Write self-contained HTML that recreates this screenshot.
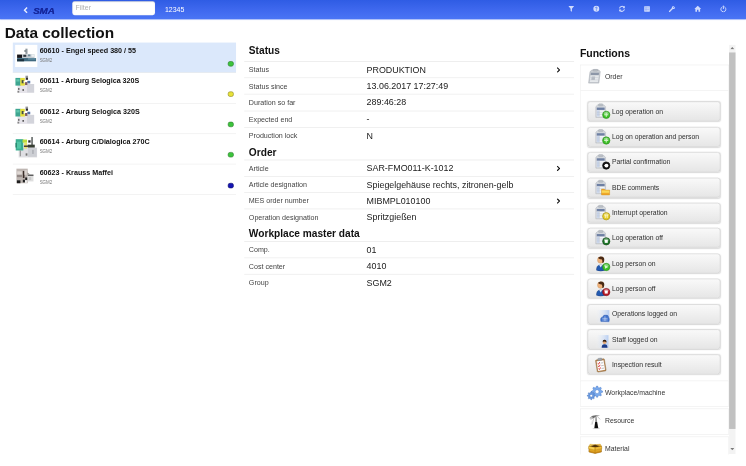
<!DOCTYPE html>
<html><head><meta charset="utf-8"><title>Data collection</title>
<style>
html,body{margin:0;padding:0;width:746px;height:466px;overflow:hidden;background:#fff;}
*{box-sizing:border-box;}
#w{position:absolute;left:0;top:0;width:1280px;height:800px;transform:scale(0.5828125);transform-origin:0 0;font-family:"Liberation Sans",sans-serif;color:#111;overflow:hidden;background:#fff;}
#hd{position:absolute;left:0;top:0;width:1280px;height:33px;background:linear-gradient(#2f5ce4,#3e68ee 50%,#4a75f5);box-shadow:0 1px 2.5px rgba(70,110,235,.75);}
#hd .back{position:absolute;left:40px;top:12px;}
#hd .logo{position:absolute;left:57px;top:10.7px;font:italic bold 14.5px "Liberation Sans",sans-serif;color:#15279c;letter-spacing:-0.3px;line-height:16px;transform:scaleX(1.17);transform-origin:0 0;text-shadow:0 0 0.5px #15279c;}
#hd .filter{position:absolute;left:124px;top:1.5px;width:142px;height:24.5px;background:#fff;border-radius:4px;font-size:12px;color:#b0b0b0;line-height:24.5px;padding-left:5.5px;box-shadow:inset 0 1px 2px rgba(0,0,0,.2);}
#hd .num{position:absolute;left:283px;top:9px;font-size:12px;color:#fff;line-height:14px;}
#hd svg.ic{position:absolute;top:9px;width:12.4px;height:12.4px;}
h1{position:absolute;left:8px;top:41.5px;margin:0;font-size:26.4px;font-weight:bold;line-height:30px;color:#111;}
#list{position:absolute;left:22px;top:73px;width:383.2px;}
.li{position:relative;height:52.3px;border-bottom:1px solid #ebebeb;}
.li.sel{background:#dbe8fb;}
.li .th{position:absolute;left:3.6px;top:4px;width:38px;height:38px;overflow:visible;}
.li .t{position:absolute;left:46px;top:6.5px;font-size:12.3px;font-weight:bold;line-height:14px;white-space:nowrap;color:#111;}
.li .s{position:absolute;left:46px;top:26px;font-size:7.6px;line-height:9px;color:#777;}
.li .dot{position:absolute;left:369px;top:31.6px;width:10.2px;height:9px;border-radius:3.6px;border:1.4px solid #2a7a2a;}
#mid{position:absolute;left:419px;top:71.4px;width:566px;}
#mid h2{margin:0;height:28.05px;font-size:17.4px;line-height:28px;padding-left:8px;font-weight:bold;border-bottom:1px solid #e2e2e2;color:#111;}
#mid h2.first{height:35px;line-height:30px;}
.r{position:relative;height:28.05px;border-bottom:1px solid #e6e6e6;}
.r .l{position:absolute;left:8px;top:0;font-size:12.2px;line-height:28px;color:#444;}
.r .v{position:absolute;left:210px;top:0;font-size:15.25px;line-height:27px;color:#1a1a1a;}
.r .c{position:absolute;left:535.5px;top:9px;}
#fn{position:absolute;left:995px;top:80.4px;width:256px;height:699.4px;overflow:hidden;}
#fn h2{margin:0;font-size:18px;line-height:24px;font-weight:bold;color:#111;}
.sec{position:relative;height:44.6px;border:1px solid #ececec;background:#fff;margin-top:3.2px;}
.sec .n{position:absolute;left:42px;top:0;line-height:40px;font-size:11.8px;color:#333;}
.sec svg{position:absolute;left:9px;top:6px;width:30px;height:30px;}
.body{border-left:1px solid #ececec;border-right:1px solid #ececec;padding:18.5px 12px 1.6px 12px;}
.btn{position:relative;height:34px;width:228px;margin-bottom:9.4px;border:1px solid #c9c9c9;border-radius:5px;background:linear-gradient(#f9f9f9,#e6e6e6);box-shadow:0 1px 2px rgba(0,0,0,.15);}
.btn span{position:absolute;left:41px;top:0;line-height:32px;font-size:11.7px;color:#2e2e2e;white-space:nowrap;}
.btn svg{position:absolute;left:8px;top:1px;width:30px;height:30px;overflow:visible;}
#sb{position:absolute;left:1251px;top:76.5px;width:11px;height:702px;background:#f3f3f3;}
#sb .th{position:absolute;left:0;top:13px;width:11px;height:646px;background:#c1c1c1;}
</style></head><body>
<div id="w">
<svg width="0" height="0" style="position:absolute"><defs><filter id="bl" x="-10%" y="-10%" width="120%" height="120%"><feGaussianBlur stdDeviation="0.85"/></filter><filter id="bl2" x="-10%" y="-10%" width="120%" height="120%"><feGaussianBlur stdDeviation="0.35"/></filter></defs></svg>
<div id="hd">
 <svg class="back" width="8" height="11" viewBox="0 0 8 11"><path d="M6.5 1 L2 5.5 L6.5 10" fill="none" stroke="#e8eeff" stroke-width="2.4"/></svg>
 <div class="logo">SMA</div>
 <div class="filter">Filter</div>
 <div class="num">12345</div>
 <svg class="ic" style="left:974.1px" viewBox="0 0 14 14"><path d="M1.5 1.5 H12.5 L8.3 6.8 V12.5 L5.7 11 V6.8 Z" fill="#cfdbfd"/></svg>
 <svg class="ic" style="left:1016.8px" viewBox="0 0 14 14"><circle cx="7" cy="7" r="5.8" fill="#cfdbfd"/><path d="M5.3 5.6 Q5.3 3.8 7 3.8 Q8.8 3.8 8.8 5.4 Q8.8 6.4 7 7.2 V8.2" fill="none" stroke="#4470f0" stroke-width="1.5"/><circle cx="7" cy="10" r="0.9" fill="#4470f0"/></svg>
 <svg class="ic" style="left:1060.5px" viewBox="0 0 14 14"><path d="M2.2 6.2 A5 5 0 0 1 11 4" fill="none" stroke="#cfdbfd" stroke-width="2"/><path d="M12.5 1.2 V5.8 H8 Z" fill="#cfdbfd"/><path d="M11.8 7.8 A5 5 0 0 1 3 10" fill="none" stroke="#cfdbfd" stroke-width="2"/><path d="M1.5 12.8 V8.2 H6 Z" fill="#cfdbfd"/></svg>
 <svg class="ic" style="left:1103.8px" viewBox="0 0 14 14"><rect x="1.5" y="1.8" width="11" height="10.6" rx="0.8" fill="#cfdbfd"/><path d="M2.5 5.2 H11.5 M2.5 8.6 H11.5" stroke="#6d90f5" stroke-width="0.9"/><path d="M5 2.5 V11.8" stroke="#6d90f5" stroke-width="0.7"/></svg>
 <svg class="ic" style="left:1146.8px" viewBox="0 0 14 14"><path d="M2 12 L8 6" stroke="#cfdbfd" stroke-width="2.6" stroke-linecap="round"/><circle cx="9.6" cy="4.4" r="3" fill="#cfdbfd"/><path d="M9.6 4.4 L13.5 0.5" stroke="#4470f0" stroke-width="2"/></svg>
 <svg class="ic" style="left:1191.3px" viewBox="0 0 14 14"><path d="M7 1 L13.6 7.2 H11.6 V12.8 H8.4 V8.8 H5.6 V12.8 H2.4 V7.2 H0.4 Z" fill="#cfdbfd"/></svg>
 <svg class="ic" style="left:1234.8px" viewBox="0 0 14 14"><path d="M4.4 3.4 A5 5 0 1 0 9.6 3.4" fill="none" stroke="#cfdbfd" stroke-width="1.9" stroke-linecap="round"/><path d="M7 1.2 V6.6" stroke="#cfdbfd" stroke-width="1.9" stroke-linecap="round"/></svg>
</div>
<h1>Data collection</h1>
<div id="list">
 <div class="li sel"><svg class="th" viewBox="0 0 38 38"><rect width="38" height="38" fill="#fff"/><g filter="url(#bl)"><rect x="17.6" y="6.5" width="3.6" height="9" fill="#8f989e"/><rect x="16" y="9" width="2" height="3" fill="#5d6b6f"/><rect x="3.3" y="16.6" width="9" height="5.8" fill="#15181c"/><rect x="12.2" y="16" width="21" height="6.6" fill="#c4ccd2"/><rect x="14" y="17" width="5" height="3.5" fill="#2f353b"/><rect x="22" y="16.5" width="4" height="3" fill="#6d8796"/><rect x="28" y="16.4" width="5" height="4" fill="#eef1f3"/><rect x="3.3" y="22.6" width="32.6" height="5.6" fill="#3f6a80"/><rect x="3.3" y="24.4" width="12" height="3.8" fill="#1f333f"/><rect x="22" y="23" width="13" height="2.2" fill="#6a95a8"/></g></svg><div class="t">60610 - Engel speed 380 / 55</div><div class="s">SGM2</div><div class="dot" style="background:#3cc43c;border-color:#2a7a2a"></div></div>
 <div class="li"><svg class="th" viewBox="0 0 38 38"><g filter="url(#bl)" transform="translate(0 0.9)" opacity="0.9"><rect x="4" y="14.2" width="28.6" height="15.5" fill="#e4e2e8"/><rect x="20.5" y="14.2" width="12" height="14.5" fill="#cfd0d8"/><rect x="0.5" y="3.8" width="9" height="13.2" fill="#2a9c84"/><rect x="2" y="6" width="5.5" height="4" fill="#4fc0a4"/><rect x="8.8" y="3.8" width="7.8" height="13.2" fill="#e4dc28"/><rect x="11.2" y="7.6" width="3.4" height="5.4" fill="#2c3a30"/><rect x="14.6" y="9" width="2" height="3" fill="#fff"/><rect x="17.7" y="0" width="4.4" height="7.2" fill="#8a8a90"/><rect x="18.8" y="3.6" width="3" height="3.2" fill="#0a0a0a"/><rect x="20.9" y="8.8" width="5" height="4.4" fill="#3d5f9a"/><rect x="17" y="11" width="4" height="5" fill="#6d4a50"/><rect x="5" y="21" width="2.4" height="3.4" fill="#555"/><rect x="12.5" y="23" width="2.6" height="3" fill="#444"/><rect x="4" y="26" width="3" height="3" fill="#777"/></g></svg><div class="t">60611 - Arburg Selogica 320S</div><div class="s">SGM2</div><div class="dot" style="background:#e8e238;border-color:#8a8420"></div></div>
 <div class="li"><svg class="th" viewBox="0 0 38 38"><g filter="url(#bl)" transform="translate(0 0.9)" opacity="0.9"><rect x="4" y="14.2" width="28.6" height="15.5" fill="#e4e2e8"/><rect x="20.5" y="14.2" width="12" height="14.5" fill="#cfd0d8"/><rect x="0.5" y="3.8" width="9" height="13.2" fill="#2a9c84"/><rect x="2" y="6" width="5.5" height="4" fill="#4fc0a4"/><rect x="8.8" y="3.8" width="7.8" height="13.2" fill="#e4dc28"/><rect x="11.2" y="7.6" width="3.4" height="5.4" fill="#2c3a30"/><rect x="14.6" y="9" width="2" height="3" fill="#fff"/><rect x="17.7" y="0" width="4.4" height="7.2" fill="#8a8a90"/><rect x="18.8" y="3.6" width="3" height="3.2" fill="#0a0a0a"/><rect x="20.9" y="8.8" width="5" height="4.4" fill="#3d5f9a"/><rect x="17" y="11" width="4" height="5" fill="#6d4a50"/><rect x="5" y="21" width="2.4" height="3.4" fill="#555"/><rect x="12.5" y="23" width="2.6" height="3" fill="#444"/><rect x="4" y="26" width="3" height="3" fill="#777"/></g></svg><div class="t">60612 - Arburg Selogica 320S</div><div class="s">SGM2</div><div class="dot" style="background:#3cc43c;border-color:#2a7a2a"></div></div>
 <div class="li"><svg class="th" viewBox="0 0 38 38"><g filter="url(#bl)" transform="translate(0 3.1)" opacity="0.9"><rect x="6" y="16.1" width="31.6" height="17" fill="#dcdce0"/><rect x="22" y="17" width="15" height="15" fill="#c8cad0"/><rect x="1" y="1.7" width="13" height="19.4" fill="#25a684"/><rect x="3" y="6" width="7" height="12" fill="#3fc09c"/><rect x="0.5" y="8" width="2.5" height="8" fill="#157a5e"/><rect x="12.7" y="2.3" width="7.7" height="5.5" fill="#b6dc2a"/><rect x="15.5" y="7.8" width="5" height="10" fill="#e6e058"/><rect x="27.6" y="-2" width="2.8" height="15.3" fill="#555b5a"/><rect x="22.5" y="3.6" width="4" height="4" fill="#0c0c0c"/><rect x="21.5" y="11.1" width="12.2" height="5" fill="#23291f"/><rect x="15" y="12.5" width="7" height="2.6" fill="#3a2a20"/><rect x="8" y="21" width="1.6" height="10" fill="#777"/><rect x="18" y="26" width="3" height="4" fill="#666"/><rect x="29" y="20" width="3" height="7" fill="#a9abb2"/></g></svg><div class="t">60614 - Arburg C/Dialogica 270C</div><div class="s">SGM2</div><div class="dot" style="background:#3cc43c;border-color:#2a7a2a"></div></div>
 <div class="li"><svg class="th" viewBox="0 0 38 38"><g filter="url(#bl)" transform="translate(0 3.9)" opacity="0.92"><rect x="2.2" y="-0.5" width="19.4" height="25" fill="#b9b0ac"/><rect x="3.5" y="4" width="8" height="6" fill="#dcd4d0"/><rect x="3" y="10" width="9" height="4" fill="#8a807c"/><rect x="13.2" y="3.4" width="2.8" height="12.2" fill="#2a1c18"/><rect x="16" y="2" width="4" height="8" fill="#d8d0cc"/><rect x="3" y="19.5" width="6" height="5" fill="#0c0c0c"/><rect x="13.2" y="18.4" width="3.6" height="4.6" fill="#0c0c0c"/><rect x="17.2" y="14.6" width="3.6" height="4.4" fill="#101010"/><rect x="17" y="19.4" width="3" height="4.4" fill="#f4f4f4"/><rect x="21.6" y="10" width="9.8" height="11.4" fill="#dcdcdc"/><rect x="21.6" y="9.6" width="9.8" height="2.4" fill="#4a4a4a"/><rect x="23.5" y="14" width="4" height="5" fill="#c4c4c4"/><path d="M21 6 L26 9.6 H21 Z" fill="#8c8480"/></g></svg><div class="t">60623 - Krauss Maffei</div><div class="s">SGM2</div><div class="dot" style="background:#1414b4;border-color:#0a0a66"></div></div>
</div>
<div id="mid">
 <h2 class="first">Status</h2>
 <div class="r"><div class="l">Status</div><div class="v">PRODUKTION</div><svg class="c" width="6" height="10" viewBox="0 0 6 10"><path d="M1 1 L5 5 L1 9" fill="none" stroke="#111" stroke-width="1.9"/></svg></div>
 <div class="r"><div class="l">Status since</div><div class="v">13.06.2017 17:27:49</div></div>
 <div class="r"><div class="l">Duration so far</div><div class="v">289:46:28</div></div>
 <div class="r"><div class="l">Expected end</div><div class="v">-</div></div>
 <div class="r" style="border-bottom:none"><div class="l">Production lock</div><div class="v">N</div></div>
 <h2>Order</h2>
 <div class="r"><div class="l">Article</div><div class="v">SAR-FMO011-K-1012</div><svg class="c" width="6" height="10" viewBox="0 0 6 10"><path d="M1 1 L5 5 L1 9" fill="none" stroke="#111" stroke-width="1.9"/></svg></div>
 <div class="r"><div class="l">Article designation</div><div class="v">Spiegelgehäuse rechts, zitronen-gelb</div></div>
 <div class="r"><div class="l">MES order number</div><div class="v">MIBMPL010100</div><svg class="c" width="6" height="10" viewBox="0 0 6 10"><path d="M1 1 L5 5 L1 9" fill="none" stroke="#111" stroke-width="1.9"/></svg></div>
 <div class="r" style="border-bottom:none"><div class="l">Operation designation</div><div class="v">Spritzgießen</div></div>
 <h2>Workplace master data</h2>
 <div class="r"><div class="l">Comp.</div><div class="v">01</div></div>
 <div class="r"><div class="l">Cost center</div><div class="v">4010</div></div>
 <div class="r" style="border-bottom:none"><div class="l">Group</div><div class="v">SGM2</div></div>
</div>
<div id="fn">
 <h2>Functions</h2>
 <div class="sec" style="margin-top:7px;border-bottom:1px solid #ececec"><svg viewBox="0 0 30 30"><g filter="url(#bl2)"><g transform="translate(2.5 0) skewX(-7)"><path d="M5.5 5 L8.5 2 H20 L23 5 V24.6 H5.5 Z" fill="#c9cdd2" stroke="#a3a9b0" stroke-width="0.9"/><rect x="10.6" y="0.6" width="7.5" height="3.4" rx="1" fill="#b9bec4" stroke="#989ea6" stroke-width="0.6"/><rect x="7.3" y="7" width="13.9" height="3.6" fill="#8d97a8"/><rect x="7.3" y="11.4" width="13.9" height="11.4" fill="#e6e9ec"/><rect x="9.4" y="13.4" width="6" height="6" fill="#b4bac2"/><path d="M7.3 15 H21.2 M7.3 19 H21.2" stroke="#c2c7ce" stroke-width="0.7"/></g></g></svg><div class="n">Order</div></div>
 <div class="body">
  <div class="btn"><svg viewBox="0 0 30 30"><g filter="url(#bl2)"><g><path d="M5.3 7 L8.5 4 H19 L22 7 V25.5 H5.3 Z" fill="#d3d7dc" stroke="#aab0b7" stroke-width="0.8"/><rect x="10" y="2.2" width="7.4" height="3.6" rx="1" fill="#bcc1c7" stroke="#9da3aa" stroke-width="0.6"/><rect x="7" y="8.6" width="13.4" height="4" fill="#6d7fa3"/><rect x="7" y="13.4" width="13.4" height="10.4" fill="#f3f5f8"/><rect x="7" y="13.4" width="4.4" height="10.4" fill="#c9d6ec"/><path d="M11.4 13.4 V23.8 M7 16.8 H20.4 M7 20.3 H20.4" stroke="#b9c0ca" stroke-width="0.7"/></g><circle cx="23.2" cy="21.1" r="6.3" fill="#3cbf28" stroke="#2a8a1c" stroke-width="1"/><ellipse cx="23.2" cy="18.6" rx="4.2" ry="2.7" fill="#fff" opacity="0.4"/><path d="M23.2 17.6 V24.6 M19.7 21.1 H26.7" stroke="#d4f7ca" stroke-width="1.7"/></g></svg><span>Log operation on</span></div>
  <div class="btn"><svg viewBox="0 0 30 30"><g filter="url(#bl2)"><g><path d="M5.3 7 L8.5 4 H19 L22 7 V25.5 H5.3 Z" fill="#d3d7dc" stroke="#aab0b7" stroke-width="0.8"/><rect x="10" y="2.2" width="7.4" height="3.6" rx="1" fill="#bcc1c7" stroke="#9da3aa" stroke-width="0.6"/><rect x="7" y="8.6" width="13.4" height="4" fill="#6d7fa3"/><rect x="7" y="13.4" width="13.4" height="10.4" fill="#f3f5f8"/><rect x="7" y="13.4" width="4.4" height="10.4" fill="#c9d6ec"/><path d="M11.4 13.4 V23.8 M7 16.8 H20.4 M7 20.3 H20.4" stroke="#b9c0ca" stroke-width="0.7"/></g><circle cx="23.2" cy="21.1" r="6.3" fill="#3cbf28" stroke="#2a8a1c" stroke-width="1"/><ellipse cx="23.2" cy="18.6" rx="4.2" ry="2.7" fill="#fff" opacity="0.4"/><path d="M23.2 17.6 V24.6 M19.7 21.1 H26.7" stroke="#d4f7ca" stroke-width="1.7"/></g></svg><span>Log on operation and person</span></div>
  <div class="btn"><svg viewBox="0 0 30 30"><g filter="url(#bl2)"><g><path d="M5.3 7 L8.5 4 H19 L22 7 V25.5 H5.3 Z" fill="#d3d7dc" stroke="#aab0b7" stroke-width="0.8"/><rect x="10" y="2.2" width="7.4" height="3.6" rx="1" fill="#bcc1c7" stroke="#9da3aa" stroke-width="0.6"/><rect x="7" y="8.6" width="13.4" height="4" fill="#6d7fa3"/><rect x="7" y="13.4" width="13.4" height="10.4" fill="#f3f5f8"/><rect x="7" y="13.4" width="4.4" height="10.4" fill="#c9d6ec"/><path d="M11.4 13.4 V23.8 M7 16.8 H20.4 M7 20.3 H20.4" stroke="#b9c0ca" stroke-width="0.7"/></g><circle cx="23.2" cy="21.1" r="6.3" fill="#161616" stroke="#000" stroke-width="1"/><circle cx="23.6" cy="21.1" r="3.3" fill="#fff"/><path d="M19.6 21.1 L23 18.2 V24 Z" fill="#fff"/></g></svg><span>Partial confirmation</span></div>
  <div class="btn"><svg viewBox="0 0 30 30"><g filter="url(#bl2)"><g><path d="M5.3 7 L8.5 4 H19 L22 7 V25.5 H5.3 Z" fill="#d3d7dc" stroke="#aab0b7" stroke-width="0.8"/><rect x="10" y="2.2" width="7.4" height="3.6" rx="1" fill="#bcc1c7" stroke="#9da3aa" stroke-width="0.6"/><rect x="7" y="8.6" width="13.4" height="4" fill="#6d7fa3"/><rect x="7" y="13.4" width="13.4" height="10.4" fill="#f3f5f8"/><rect x="7" y="13.4" width="4.4" height="10.4" fill="#c9d6ec"/><path d="M11.4 13.4 V23.8 M7 16.8 H20.4 M7 20.3 H20.4" stroke="#b9c0ca" stroke-width="0.7"/></g><path d="M15 17.5 H20 L21.5 19.2 H29 V27.5 H15 Z" fill="#f0a82a" stroke="#c98a18" stroke-width="0.7"/><rect x="15.7" y="19.8" width="12.6" height="4" fill="#fbd858"/></g></svg><span>BDE comments</span></div>
  <div class="btn"><svg viewBox="0 0 30 30"><g filter="url(#bl2)"><g><path d="M5.3 7 L8.5 4 H19 L22 7 V25.5 H5.3 Z" fill="#d3d7dc" stroke="#aab0b7" stroke-width="0.8"/><rect x="10" y="2.2" width="7.4" height="3.6" rx="1" fill="#bcc1c7" stroke="#9da3aa" stroke-width="0.6"/><rect x="7" y="8.6" width="13.4" height="4" fill="#6d7fa3"/><rect x="7" y="13.4" width="13.4" height="10.4" fill="#f3f5f8"/><rect x="7" y="13.4" width="4.4" height="10.4" fill="#c9d6ec"/><path d="M11.4 13.4 V23.8 M7 16.8 H20.4 M7 20.3 H20.4" stroke="#b9c0ca" stroke-width="0.7"/></g><circle cx="23.2" cy="21.1" r="6.3" fill="#e3cb26" stroke="#a08c16" stroke-width="1"/><ellipse cx="23.2" cy="18.6" rx="4.2" ry="2.7" fill="#fff" opacity="0.4"/><path d="M21.6 18.2 V24 M24.8 18.2 V24" stroke="#fffad0" stroke-width="1.5"/></g></svg><span>Interrupt operation</span></div>
  <div class="btn"><svg viewBox="0 0 30 30"><g filter="url(#bl2)"><g><path d="M5.3 7 L8.5 4 H19 L22 7 V25.5 H5.3 Z" fill="#d3d7dc" stroke="#aab0b7" stroke-width="0.8"/><rect x="10" y="2.2" width="7.4" height="3.6" rx="1" fill="#bcc1c7" stroke="#9da3aa" stroke-width="0.6"/><rect x="7" y="8.6" width="13.4" height="4" fill="#6d7fa3"/><rect x="7" y="13.4" width="13.4" height="10.4" fill="#f3f5f8"/><rect x="7" y="13.4" width="4.4" height="10.4" fill="#c9d6ec"/><path d="M11.4 13.4 V23.8 M7 16.8 H20.4 M7 20.3 H20.4" stroke="#b9c0ca" stroke-width="0.7"/></g><circle cx="23.2" cy="21.1" r="6.3" fill="#1c7426" stroke="#0c4214" stroke-width="1"/><ellipse cx="23.2" cy="18.6" rx="4.2" ry="2.7" fill="#fff" opacity="0.4"/><rect x="20.6" y="18.5" width="5.2" height="5.2" fill="#fff"/></g></svg><span>Log operation off</span></div>
  <div class="btn"><svg viewBox="0 0 30 30"><g filter="url(#bl2)"><g><path d="M6.5 26.5 Q6 17.6 13.7 17.6 Q21.4 17.6 21 26.5 Q13.7 29.5 6.5 26.5 Z" fill="#245ab0" stroke="#163a7a" stroke-width="0.7"/><path d="M11.2 17.8 L13.7 22 L16.2 17.8 Z" fill="#dfe8f5"/><circle cx="13.7" cy="9.2" r="5.6" fill="#f0b27a" stroke="#b98558" stroke-width="0.5"/><path d="M9 5.6 Q12 1.6 17 3.6 Q21 6 19.3 11.5 Q18.6 14.5 16.5 14 Q17 10 15.5 8 Q12 8.4 9 5.6 Z" fill="#4a2a12"/></g><circle cx="23.2" cy="21.1" r="6.3" fill="#3cbf28" stroke="#2a8a1c" stroke-width="1"/><ellipse cx="23.2" cy="18.6" rx="4.2" ry="2.7" fill="#fff" opacity="0.4"/><path d="M21 18 L26.6 21.1 L21 24.2 Z" fill="#dcfad2"/></g></svg><span>Log person on</span></div>
  <div class="btn"><svg viewBox="0 0 30 30"><g filter="url(#bl2)"><g><path d="M6.5 26.5 Q6 17.6 13.7 17.6 Q21.4 17.6 21 26.5 Q13.7 29.5 6.5 26.5 Z" fill="#245ab0" stroke="#163a7a" stroke-width="0.7"/><path d="M11.2 17.8 L13.7 22 L16.2 17.8 Z" fill="#dfe8f5"/><circle cx="13.7" cy="9.2" r="5.6" fill="#f0b27a" stroke="#b98558" stroke-width="0.5"/><path d="M9 5.6 Q12 1.6 17 3.6 Q21 6 19.3 11.5 Q18.6 14.5 16.5 14 Q17 10 15.5 8 Q12 8.4 9 5.6 Z" fill="#4a2a12"/></g><circle cx="23.2" cy="21.1" r="6.3" fill="#b81a26" stroke="#7a0c16" stroke-width="1"/><ellipse cx="23.2" cy="18.6" rx="4.2" ry="2.7" fill="#fff" opacity="0.4"/><rect x="20.6" y="18.5" width="5.2" height="5.2" fill="#fff"/></g></svg><span>Log person off</span></div>
  <div class="btn"><svg viewBox="0 0 30 30"><g filter="url(#bl2)"><defs><linearGradient id="lg1" x1="0" x2="1"><stop offset="0" stop-color="#eef3fb" stop-opacity="0"/><stop offset="1" stop-color="#b6cdf2"/></linearGradient></defs><rect x="5" y="8" width="23.5" height="21" fill="url(#lg1)"/><g filter="url(#bl)" transform="translate(-0.5 -4.3)"><path d="M14.5 32 Q12.5 25 17.5 24 Q19 20 23 21 Q27.5 20.5 28 25 Q30 27 28.5 32 Z" fill="#3f72cc" stroke="#2b55a4" stroke-width="0.6"/><path d="M17 26.5 H26 M17 29.3 H26 M21.5 23 V31" stroke="#dbe6fa" stroke-width="1"/></g></g></svg><span>Operations logged on</span></div>
  <div class="btn"><svg viewBox="0 0 30 30"><g filter="url(#bl2)"><defs><linearGradient id="lg2" x1="0" x2="1"><stop offset="0" stop-color="#eef3fb" stop-opacity="0"/><stop offset="1" stop-color="#b6cdf2"/></linearGradient></defs><rect x="5" y="8" width="22" height="22" fill="url(#lg2)"/><g filter="url(#bl)" transform="translate(-0.2 -3)"><path d="M15.5 32.5 Q15.5 26.5 20.5 26.5 Q25.5 26.5 25.5 32.5 Z" fill="#1a3a88"/><circle cx="20.5" cy="23" r="3.3" fill="#e3a674"/><path d="M17.2 22.4 Q17.2 18.8 20.6 19 Q24.2 19 23.8 23.5 Q22 20.8 17.2 22.4 Z" fill="#2e1a0c"/></g></g></svg><span>Staff logged on</span></div>
  <div class="btn"><svg viewBox="0 0 30 30"><g filter="url(#bl2)"><g transform="translate(1 1.4) scale(0.93) rotate(-9 14 16)"><rect x="5.5" y="5.5" width="16.5" height="22.5" rx="1.5" fill="#b88856" stroke="#86602f" stroke-width="0.8"/><rect x="7.3" y="8" width="12.9" height="18" fill="#fdfdfd"/><rect x="10" y="3.3" width="7.5" height="4.2" rx="1" fill="#9ea4ab" stroke="#6d737a" stroke-width="0.6"/><path d="M8.6 12 l1.5 1.7 l2.6 -3.3 M8.6 17 l1.5 1.7 l2.6 -3.3 M8.6 22 l1.5 1.7 l2.6 -3.3" fill="none" stroke="#d81e1e" stroke-width="1.5"/><path d="M14.2 12.5 H19 M14.2 17.5 H19 M14.2 22.5 H19" stroke="#8f8f8f" stroke-width="1"/></g></g></svg><span>Inspection result</span></div>
 </div>
 <div class="sec" style="margin-top:0"><svg viewBox="0 0 30 30"><g filter="url(#bl2)"><path d="M29.05 11.06 L29.05 12.94 L26.30 14.06 L25.77 15.35 L26.92 18.09 L25.59 19.42 L22.85 18.27 L21.56 18.80 L20.44 21.55 L18.56 21.55 L17.44 18.80 L16.15 18.27 L13.41 19.42 L12.08 18.09 L13.23 15.35 L12.70 14.06 L9.95 12.94 L9.95 11.06 L12.70 9.94 L13.23 8.65 L12.08 5.91 L13.41 4.58 L16.15 5.73 L17.44 5.20 L18.56 2.45 L20.44 2.45 L21.56 5.20 L22.85 5.73 L25.59 4.58 L26.92 5.91 L25.77 8.65 L26.30 9.94 Z" fill="#7aaaec" stroke="#3a6cc0" stroke-width="0.7"/><circle cx="19.5" cy="12" r="3.26" fill="#fff" stroke="#3a6cc0" stroke-width="0.6"/><path d="M16.27 18.33 L16.27 19.67 L14.32 20.46 L13.94 21.37 L14.76 23.31 L13.81 24.26 L11.87 23.44 L10.96 23.82 L10.17 25.77 L8.83 25.77 L8.04 23.82 L7.13 23.44 L5.19 24.26 L4.24 23.31 L5.06 21.37 L4.68 20.46 L2.73 19.67 L2.73 18.33 L4.68 17.54 L5.06 16.63 L4.24 14.69 L5.19 13.74 L7.13 14.56 L8.04 14.18 L8.83 12.23 L10.17 12.23 L10.96 14.18 L11.87 14.56 L13.81 13.74 L14.76 14.69 L13.94 16.63 L14.32 17.54 Z" fill="#6a9be2" stroke="#3462b0" stroke-width="0.7"/><circle cx="9.5" cy="19" r="2.31" fill="#fff" stroke="#3462b0" stroke-width="0.6"/></g></svg><div class="n">Workplace/machine</div></div>
 <div class="sec"><svg viewBox="0 0 30 30"><g filter="url(#bl2)"><path d="M7.5 8.5 Q13 2.5 24.5 5.5 Q17 6 12.8 10 Z" fill="#6a6a6a"/><path d="M7 9 L11 7 L12.6 9.5 L8.6 11.7 Z" fill="#d0d0d0" stroke="#8a8a8a" stroke-width="0.5"/><path d="M16.6 7 L16.2 17 L19.6 17 L18.6 7 Z" fill="#8c8c8c"/><path d="M16.2 16 L14.8 27 L21.6 27 L19.6 16 Z" fill="#0a0a0a"/><path d="M14 9 L10.8 20.5" stroke="#c8c8c8" stroke-width="1.7"/><path d="M11.5 13 L9 21" stroke="#e2e2e2" stroke-width="1.2"/><path d="M20 7 L25 11.5" stroke="#b0b0b0" stroke-width="1.2"/><path d="M12 27.4 H24" stroke="#aaa" stroke-width="0.8"/></g></svg><div class="n">Resource</div></div>
 <div class="sec"><svg viewBox="0 0 30 30"><g filter="url(#bl2)"><path d="M5.5 9.5 L16 7 L27 9.5 V19.5 L16 22 L5.5 19.5 Z" fill="#dfa424" stroke="#8a5c0c" stroke-width="0.8"/><path d="M5.5 9.5 L16 12 L27 9.5 L16 7.2 Z" fill="#4a2e08"/><path d="M16 12 V22" stroke="#9a6c10" stroke-width="0.7"/><path d="M5.5 9.5 L4.4 13.4 L15 16 L16 12 Z" fill="#f8d254" stroke="#a87412" stroke-width="0.5"/><path d="M27 9.5 L28 13.4 L17 16 L16 12 Z" fill="#efbc3a" stroke="#a87412" stroke-width="0.5"/><path d="M5.5 9.5 L7.5 6 L16 7.2 Z" fill="#f6d462" stroke="#a87412" stroke-width="0.4"/><path d="M27 9.5 L25 6 L16 7.2 Z" fill="#f0c244" stroke="#a87412" stroke-width="0.4"/><path d="M6 17.5 L16 20 L26.5 17.5 V19.5 L16 22 L6 19.5 Z" fill="#c07c10" opacity="0.7"/></g></svg><div class="n">Material</div></div>
</div>
<div id="sb"><div class="th"></div><svg style="position:absolute;left:2px;top:3px" width="7" height="5" viewBox="0 0 7 5"><path d="M0 4.5 L3.5 0.5 L7 4.5 Z" fill="#7a7a7a"/></svg><svg style="position:absolute;left:2px;top:691px" width="7" height="5" viewBox="0 0 7 5"><path d="M0 0.5 L3.5 4.5 L7 0.5 Z" fill="#7a7a7a"/></svg></div>
</div>
</body></html>
